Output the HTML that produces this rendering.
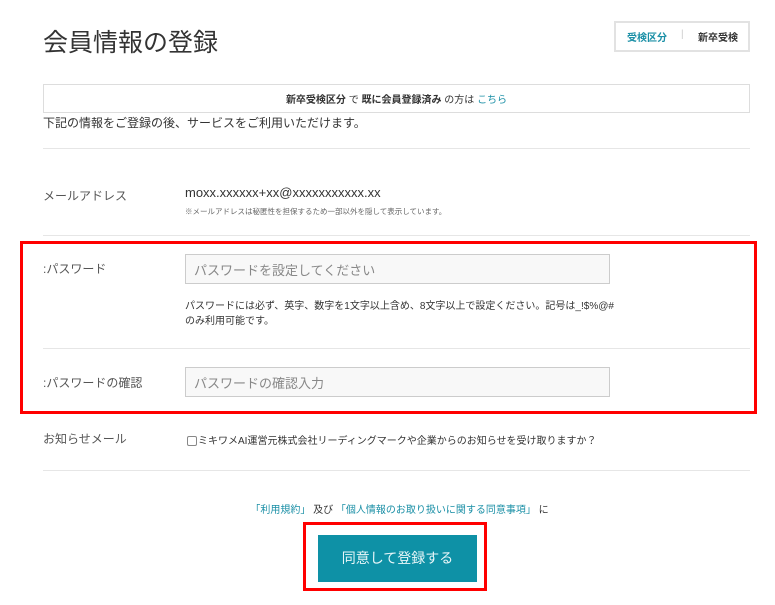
<!DOCTYPE html>
<html><head><meta charset="utf-8"><style>
*{margin:0;padding:0;box-sizing:border-box}
body{width:775px;height:605px;background:#fff;position:relative;overflow:hidden;font-family:"Liberation Sans","Noto Sans CJK JP",sans-serif;color:#333}
.a{position:absolute;white-space:nowrap}
.hr{position:absolute;left:43px;width:707px;height:1px;background:#e6e6e6}
.inp{position:absolute;left:185px;width:425px;height:30px;background:#f8f8f8;border:1px solid #ccc;font-size:13px;color:#888;padding:5px 0 0 8px}
.teal{color:#1a8fa6}
</style></head><body>
<div class="a" style="left:43px;top:23px;font-size:25px;color:#333">会員情報の登録</div>
<div class="a" style="left:614px;top:21px;width:136px;height:31px;border:2px solid #e2e2e2;font-size:10px;font-weight:bold">
 <span class="a teal" style="left:11px;top:6px">受検区分</span>
 <span class="a" style="left:65px;top:6px;color:#ccc;font-weight:normal">|</span>
 <span class="a" style="left:82px;top:6px;color:#333">新卒受検</span>
</div>
<div class="a" style="left:43px;top:84px;width:707px;height:29px;border:1px solid #ddd;font-size:10px;text-align:center;padding-top:6px">
 <b>新卒受検区分</b> で <b>既に会員登録済み</b> の方は <span class="teal">こちら</span>
</div>
<div class="a" style="left:43px;top:114px;font-size:12px">下記の情報をご登録の後、サービスをご利用いただけます。</div>
<div class="hr" style="top:148px"></div>
<div class="a" style="left:43px;top:187px;font-size:12px;color:#555">メールアドレス</div>
<div class="a" style="left:185px;top:185px;font-size:13px">moxx.xxxxxx+xx@xxxxxxxxxxx.xx</div>
<div class="a" style="left:185px;top:206px;font-size:7.5px;color:#666">※メールアドレスは秘匿性を担保するため一部以外を隠して表示しています。</div>
<div class="hr" style="top:235px"></div>
<div class="a" style="left:20px;top:241px;width:737px;height:173px;border:3px solid #f00"></div>
<div class="a" style="left:43px;top:260px;font-size:12px;color:#555">:パスワード</div>
<div class="inp" style="top:254px">パスワードを設定してください</div>
<div class="a" style="left:185px;top:299px;font-size:10px;line-height:15px">パスワードには必ず、英字、数字を1文字以上含め、8文字以上で設定ください。記号は_!$%@#<br>のみ利用可能です。</div>
<div class="hr" style="top:348px;left:43px;width:707px"></div>
<div class="a" style="left:43px;top:374px;font-size:12px;color:#555">:パスワードの確認</div>
<div class="inp" style="top:367px">パスワードの確認入力</div>
<div class="a" style="left:43px;top:430px;font-size:12px;color:#555">お知らせメール</div>
<div class="a" style="left:187px;top:436px;width:10px;height:10px;border:1px solid #888;border-radius:2px"></div>
<div class="a" style="left:198px;top:432px;font-size:10px">ミキワメAI運営元株式会社リーディングマークや企業からのお知らせを受け取りますか？</div>
<div class="hr" style="top:470px"></div>
<div class="a" style="left:0;width:775px;top:501px;text-align:center;font-size:10px;padding-left:24px"><span class="teal">「利用規約」</span> 及び <span class="teal">「個人情報のお取り扱いに関する同意事項」</span> に</div>
<div class="a" style="left:303px;top:522px;width:184px;height:69px;border:3px solid #f00"></div>
<div class="a" style="left:318px;top:535px;width:159px;height:47px;background:#0e91a6;color:#e8f6f8;font-size:14px;text-align:center;line-height:47px">同意して登録する</div>
</body></html>
